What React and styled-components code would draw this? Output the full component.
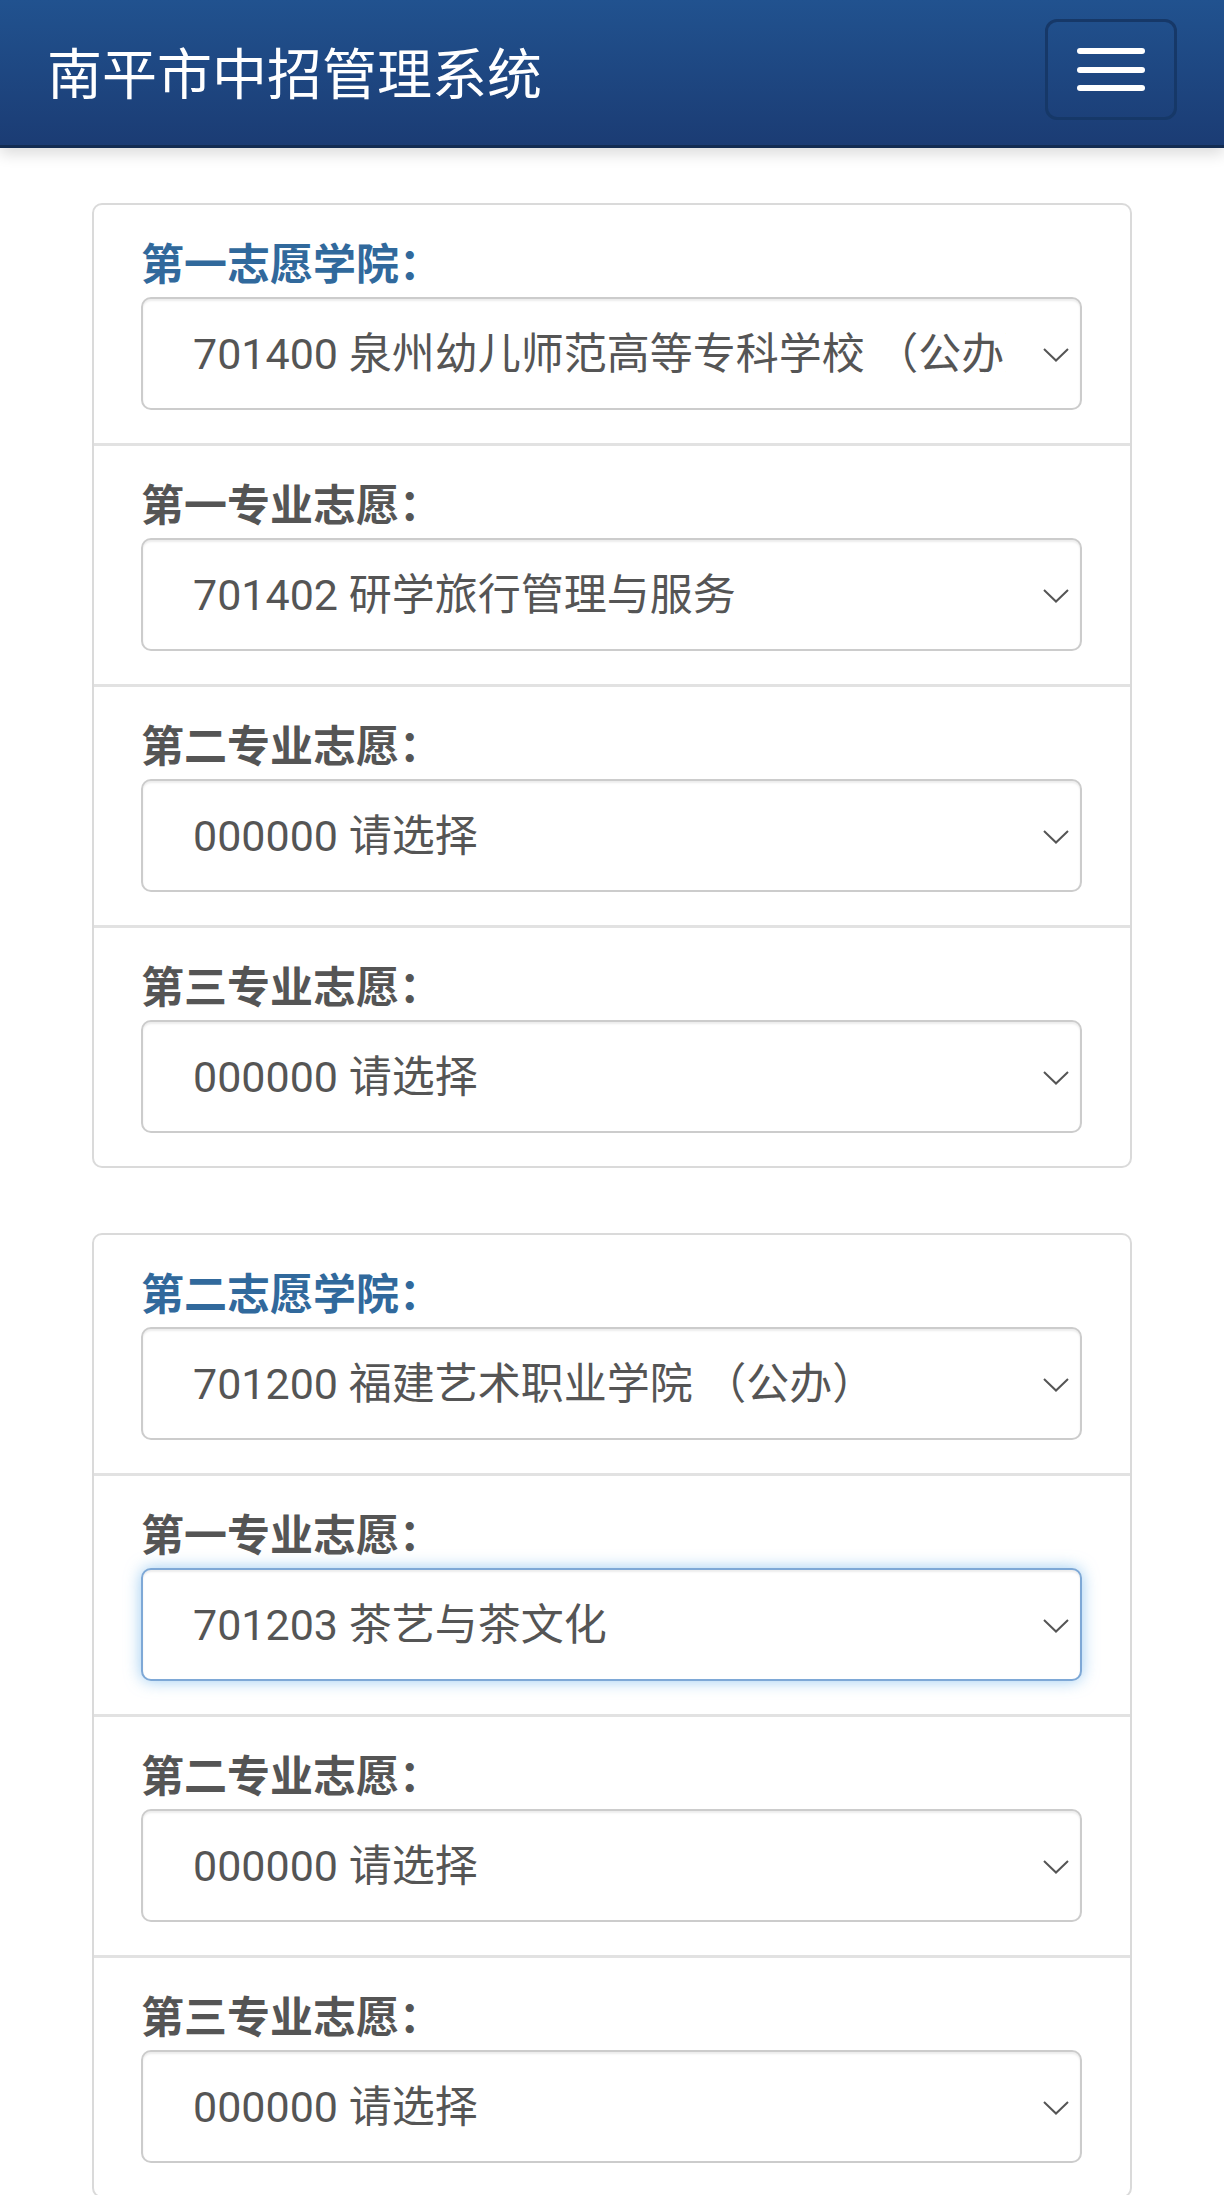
import React from "react";
import styled, { createGlobalStyle } from "styled-components";

const GlobalStyle = createGlobalStyle`
  body {
    margin: 0;
    background: #fff;
    font-family: Roboto, "Noto Sans CJK SC", sans-serif;
  }
`;

const panels = [
  {
    college: "第一志愿学院：",
    rows: [
      "701400 泉州幼儿师范高等专科学校 （公办）",
      "701402 研学旅行管理与服务",
      "000000 请选择",
      "000000 请选择",
    ],
  },
  {
    college: "第二志愿学院：",
    rows: [
      "701200 福建艺术职业学院 （公办）",
      "701203 茶艺与茶文化",
      "000000 请选择",
      "000000 请选择",
    ],
    focused: 1,
  },
];

const majorLabels = ["第一专业志愿：", "第二专业志愿：", "第三专业志愿："];

const App = () => {
  return (
    <Page>
      <GlobalStyle />
      <Header>
        <Brand>南平市中招管理系统</Brand>
        <Toggle aria-label="menu">
          <Bar />
          <Bar />
          <Bar />
        </Toggle>
      </Header>

      <Main>
        {panels.map((panel, p) => (
          <Panel key={p}>
            {panel.rows.map((value, i) => (
              <Row key={i}>
                <Label $primary={i === 0}>
                  {i === 0 ? panel.college : majorLabels[i - 1]}
                </Label>
                <SelectWrap>
                  <Select
                    $focused={panel.focused === i}
                    defaultValue={value}
                  >
                    <option value={value}>{value}</option>
                  </Select>
                  <Chevron viewBox="0 0 26 14">
                    <path d="M1 1 L13 12.5 L25 1" />
                  </Chevron>
                </SelectWrap>
              </Row>
            ))}
          </Panel>
        ))}
      </Main>
    </Page>
  );
};

const Page = styled.div`
  min-height: 2195px;
`;

const Header = styled.header`
  height: 148px;
  display: flex;
  align-items: center;
  justify-content: space-between;
  padding: 0 47px 6px 47px;
  box-sizing: border-box;
  background: linear-gradient(#21528f, #1b3c74);
  border-bottom: 3px solid #132c52;
  box-shadow: 0 6px 14px rgba(0, 0, 0, 0.14);
`;

const Brand = styled.div`
  color: #fff;
  font-family: "Noto Sans CJK SC", sans-serif;
  font-size: 55px;
  line-height: 1.2;
`;

const Toggle = styled.button`
  width: 132px;
  height: 101px;
  box-sizing: border-box;
  border: 3px solid #163868;
  border-radius: 12px;
  background: transparent;
  display: flex;
  flex-direction: column;
  align-items: center;
  justify-content: center;
  gap: 12.5px;
  padding: 0;
`;

const Bar = styled.span`
  display: block;
  width: 68px;
  height: 6px;
  border-radius: 3px;
  background: #fff;
`;

const Main = styled.main`
  width: 1040px;
  margin: 55px auto 0;
  display: flex;
  flex-direction: column;
  gap: 65px;
`;

const Panel = styled.section`
  border: 2px solid #dadada;
  border-radius: 10px;
  background: #fff;
`;

const Row = styled.div`
  padding: 32px 48px 33px 47px;
  & + & {
    border-top: 3px solid #e2e2e2;
  }
`;

const Label = styled.div`
  font-family: "Noto Sans CJK SC", sans-serif;
  font-weight: 700;
  font-size: 43px;
  line-height: 48px;
  color: ${(p) => (p.$primary ? "#31699c" : "#555555")};
  margin-bottom: 12px;
`;

const SelectWrap = styled.div`
  position: relative;
`;

const Select = styled.select`
  appearance: none;
  -webkit-appearance: none;
  display: block;
  width: 100%;
  height: 113px;
  box-sizing: border-box;
  padding: 0 74px 0 50px;
  border: 2px solid ${(p) => (p.$focused ? "#7ea8d6" : "#cccccc")};
  border-radius: 10px;
  background: #fff;
  color: #555555;
  font-family: Roboto, "Noto Sans CJK SC", sans-serif;
  font-size: 43px;
  outline: none;
  box-shadow: ${(p) =>
    p.$focused
      ? "inset 0 2px 2px rgba(0,0,0,.075), 0 0 16px rgba(102,175,233,.65)"
      : "inset 0 2px 2px rgba(0,0,0,.075)"};
`;

const Chevron = styled.svg`
  position: absolute;
  right: 13px;
  top: 50%;
  width: 26px;
  height: 14px;
  margin-top: -6px;
  fill: none;
  stroke: #555;
  stroke-width: 2;
  pointer-events: none;
`;

export default App;
